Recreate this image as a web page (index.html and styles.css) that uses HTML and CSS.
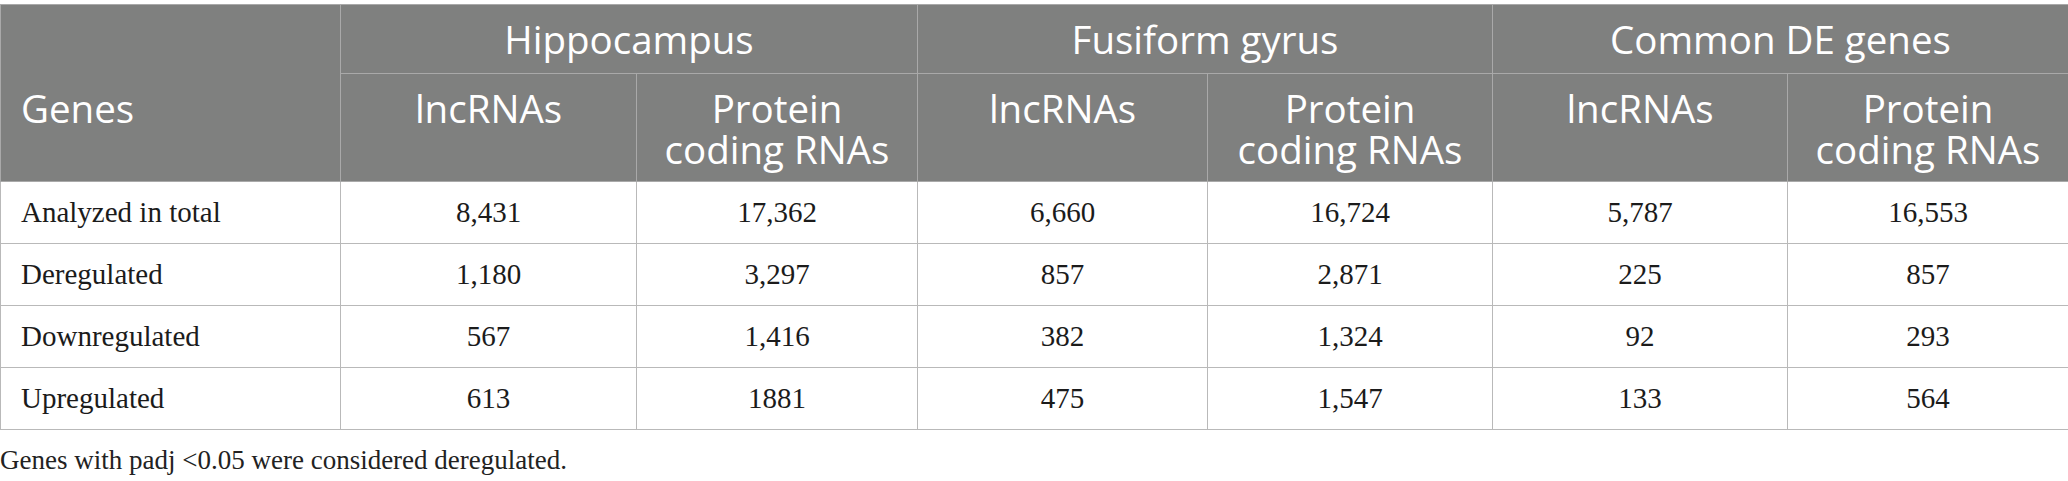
FILE: index.html
```html
<!DOCTYPE html>
<html>
<head>
<meta charset="utf-8">
<link rel="stylesheet" href="styles.css">
</head>
<body>
<table class="data">
  <colgroup>
    <col class="c0"><col class="c1"><col class="c2"><col class="c3"><col class="c4"><col class="c5"><col class="c6">
  </colgroup>
  <thead>
    <tr class="h1">
      <th rowspan="2" class="genes">Genes</th>
      <th colspan="2">Hippocampus</th>
      <th colspan="2">Fusiform gyrus</th>
      <th colspan="2">Common DE genes</th>
    </tr>
    <tr class="h2">
      <th>lncRNAs</th>
      <th>Protein<br>coding RNAs</th>
      <th>lncRNAs</th>
      <th>Protein<br>coding RNAs</th>
      <th>lncRNAs</th>
      <th>Protein<br>coding RNAs</th>
    </tr>
  </thead>
  <tbody>
    <tr><td class="lbl">Analyzed in total</td><td>8,431</td><td>17,362</td><td>6,660</td><td>16,724</td><td>5,787</td><td>16,553</td></tr>
    <tr><td class="lbl">Deregulated</td><td>1,180</td><td>3,297</td><td>857</td><td>2,871</td><td>225</td><td>857</td></tr>
    <tr><td class="lbl">Downregulated</td><td>567</td><td>1,416</td><td>382</td><td>1,324</td><td>92</td><td>293</td></tr>
    <tr><td class="lbl">Upregulated</td><td>613</td><td>1881</td><td>475</td><td>1,547</td><td>133</td><td>564</td></tr>
  </tbody>
</table>
<p class="note">Genes with padj &lt;0.05 were considered deregulated.</p>
</body>
</html>
```
FILE: styles.css
```css
html, body {
  margin: 0;
  padding: 0;
  background: #ffffff;
}
body {
  padding-top: 4px;
}
.data {
  border-collapse: collapse;
  table-layout: fixed;
  width: 2068px;
  font-family: "Liberation Serif", "Times New Roman", serif;
}
.c0 { width: 340px; }
.c1 { width: 296px; }
.c2 { width: 281px; }
.c3 { width: 290px; }
.c4 { width: 285px; }
.c5 { width: 295px; }
.c6 { width: 281px; }

.data th {
  background: #7f807f;
  color: #ffffff;
  font-family: "Open Sans", "Noto Sans", sans-serif;
  font-weight: 500;
  font-size: 38.5px;
  line-height: 41px;
  text-align: center;
  border: 1px solid #a9a9a9;
  padding: 0 6px;
}
.data tr.h1 th {
  height: 68px;
  vertical-align: middle;
  padding-top: 0;
  padding-bottom: 0;
}
.data tr.h2 th {
  vertical-align: top;
  padding-top: 14px;
  padding-bottom: 11px;
}
.data tr.h1 th.genes {
  text-align: left;
  vertical-align: top;
  padding-left: 20px;
  padding-top: 83px;
}
.data td {
  border: 1px solid #b9b9b9;
  height: 61px;
  padding: 0 8px;
  text-align: center;
  vertical-align: middle;
  font-size: 29px;
  color: #1b1b1b;
}
.data td.lbl {
  text-align: left;
  padding-left: 20px;
}
.note {
  margin: 15px 0 0 0;
  font-family: "Liberation Serif", "Times New Roman", serif;
  font-size: 27px;
  color: #222222;
}
```
